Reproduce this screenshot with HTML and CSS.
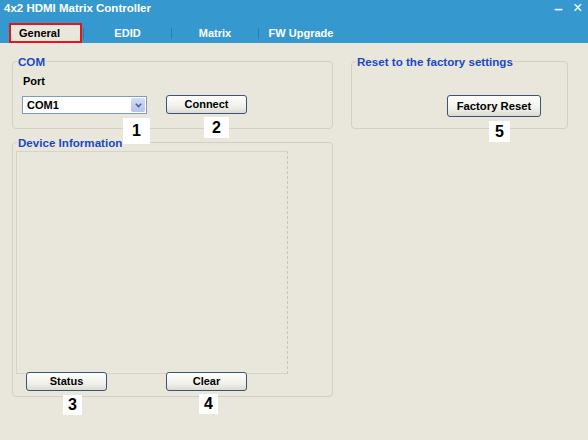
FILE: index.html
```html
<!DOCTYPE html>
<html>
<head>
<meta charset="utf-8">
<link rel="stylesheet" href="styles.css">
</head>
<body>
<div class="window">
  <div class="titlebar">
    <span class="title">4x2 HDMI Matrix Controller</span>
    <span class="controls"><span class="ctl min">–</span><span class="ctl close">×</span></span>
  </div>
  <div class="tabbar">
    <div class="tab active">General</div>
    <div class="tab t-edid">EDID</div>
    <div class="tab t-matrix">Matrix</div>
    <div class="tab t-fw">FW Upgrade</div>
  </div>
  <div class="content">
    <div class="col-left">
      <fieldset class="group com">
        <legend>COM</legend>
        <div class="port">Port</div>
        <div class="com-row">
          <div class="combo">
            <span class="combo-text">COM1</span>
            <span class="combo-btn"><svg width="7" height="5" viewBox="0 0 7 5"><polyline points="0.8,0.8 3.5,3.6 6.2,0.8" fill="none" stroke="#4d6185" stroke-width="1.5"/></svg></span>
          </div>
          <button class="btn">Connect</button>
        </div>
      </fieldset>
      <fieldset class="group device">
        <legend>Device Information</legend>
        <div class="info-box"></div>
        <div class="dev-row">
          <button class="btn">Status</button>
          <button class="btn">Clear</button>
        </div>
      </fieldset>
    </div>
    <fieldset class="group reset">
      <legend>Reset to the factory settings</legend>
      <button class="btn btn-factory">Factory Reset</button>
    </fieldset>
  </div>
  <span class="marker m1">1</span>
  <span class="marker m2">2</span>
  <span class="marker m3">3</span>
  <span class="marker m4">4</span>
  <span class="marker m5">5</span>
</div>
</body>
</html>
```

FILE: styles.css
```css
* { box-sizing: border-box; }
html, body { margin: 0; padding: 0; }
body {
  width: 588px;
  height: 440px;
  overflow: hidden;
  background: #e9e7db;
  font-family: "Liberation Sans", Arial, sans-serif;
}
.window {
  position: relative;
  width: 588px;
  height: 440px;
  background: #e9e7db;
}
.titlebar {
  height: 20px;
  background: #3598cf;
  display: flex;
  justify-content: space-between;
  align-items: flex-start;
  padding: 1px 0 0 4px;
  color: #fff;
}
.title {
  font-weight: bold;
  font-size: 11.5px;
  line-height: 14px;
}
.controls {
  display: flex;
  gap: 10px;
  margin-right: 6px;
  font-size: 15px;
  line-height: 13px;
  font-weight: bold;
}
.ctl.min { width: 9px; text-align: center; margin-top: 1px; }
.ctl.close { width: 9px; text-align: center; font-weight: normal; font-size: 16px; }
.tabbar {
  height: 23px;
  background: #3598cf;
  display: flex;
  align-items: center;
  padding-top: 3px;
}
.tab {
  font-weight: bold;
  font-size: 11px;
  line-height: 11px;
  height: 11px;
  color: #fff;
  text-align: center;
  border-left: 1px solid #2a7fb2;
}
.tab.active {
  margin-left: 9px;
  width: 73px;
  height: 20px;
  line-height: 16px;
  color: #000;
  background: #e9e7db;
  border: 2px solid #e0171c;
  text-align: left;
  padding-left: 8px;
}
.t-edid { width: 88px; margin-left: 1px; }
.t-matrix { width: 87px; }
.t-fw { width: 85px; }
.content {
  display: flex;
  gap: 18px;
  padding: 12px 0 0 12px;
}
.col-left {
  width: 321px;
  display: flex;
  flex-direction: column;
  gap: 7px;
}
.group {
  margin: 0;
  padding: 0;
  border: 1px solid #d3d0c1;
  border-radius: 4px;
  min-width: 0;
}
.group legend {
  margin-left: 4px;
  padding: 0 1px;
  color: #1b47c6;
  font-weight: bold;
  font-size: 11.6px;
  line-height: 13px;
}
.com { height: 74px; }
.port {
  margin: 7px 0 0 10px;
  font-weight: bold;
  font-size: 11px;
  line-height: 13px;
  color: #000;
}
.com-row {
  margin: 7px 0 0 9px;
  display: flex;
  align-items: flex-end;
  gap: 19px;
}
.combo {
  width: 125px;
  height: 18px;
  background: #fff;
  border: 1px solid #7f9db9;
  display: flex;
  align-items: center;
  justify-content: space-between;
  padding: 1px;
}
.combo-text {
  padding-left: 3px;
  font-weight: bold;
  font-size: 11px;
  color: #000;
}
.combo-btn {
  width: 14px;
  height: 14px;
  background: linear-gradient(#d3dcf8, #b4c2ec);
  border-radius: 2px;
  display: flex;
  align-items: center;
  justify-content: center;
}
.btn {
  width: 81px;
  height: 19px;
  padding: 0;
  border: 1px solid #3b5475;
  border-radius: 3px;
  background: linear-gradient(#fdfdfb 0%, #f1f1ec 60%, #dcdbd2 100%);
  font-family: "Liberation Sans", Arial, sans-serif;
  font-weight: bold;
  font-size: 11px;
  color: #000;
  line-height: 15px;
}
.device { height: 261px; }
.info-box {
  margin: 2px 0 0 3px;
  width: 272px;
  height: 223px;
  border: 1px solid #d6d4c6;
  border-right: 1px dashed #c8c6b8;
}
.dev-row {
  margin: -2px 0 0 13px;
  display: flex;
  gap: 59px;
}
.reset { width: 217px; height: 74px; }
.btn-factory {
  margin: 27px 0 0 95px;
  width: 94px;
  height: 22px;
  font-size: 11.3px;
}
.marker {
  position: absolute;
  background: #fff;
  color: #000;
  font-weight: bold;
  font-size: 16px;
  display: flex;
  align-items: center;
  justify-content: center;
}
.m1 { left: 123px; top: 118px; width: 27px; height: 26px; }
.m2 { left: 204px; top: 117px; width: 25px; height: 21px; }
.m3 { left: 63px; top: 395px; width: 19px; height: 20px; }
.m4 { left: 199px; top: 394px; width: 19px; height: 20px; }
.m5 { left: 489px; top: 121px; width: 21px; height: 21px; }
```
